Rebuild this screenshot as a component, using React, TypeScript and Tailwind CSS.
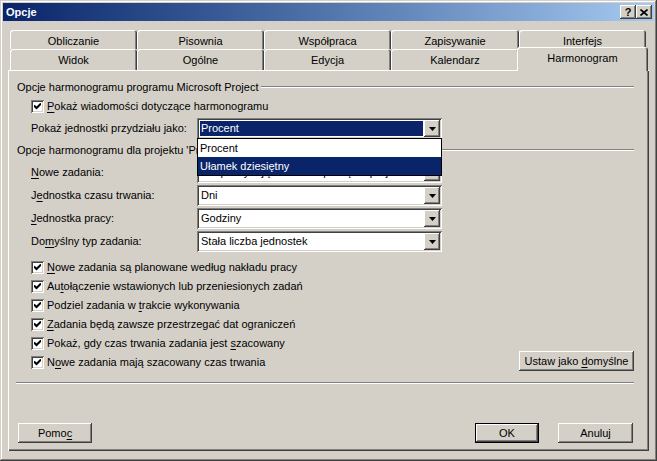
import React from 'react';

const raised =
  'bg-[#d4d0c8] shadow-[inset_-1px_-1px_#404040,inset_1px_1px_#fff,inset_-2px_-2px_#808080]';
const sunken =
  'shadow-[inset_1px_1px_#808080,inset_-1px_-1px_#fff,inset_2px_2px_#404040,inset_-2px_-2px_#d4d0c8]';

function U({ children }: { children: React.ReactNode }) {
  return <span className="underline underline-offset-[2px]">{children}</span>;
}

function Check() {
  return (
    <div className={`w-[13px] h-[13px] shrink-0 bg-white flex items-center justify-center ${sunken}`}>
      <svg width="7" height="7" viewBox="0 0 7 7">
        <path d="M0 2.5 L2.5 5 L7 0.5" stroke="#000" strokeWidth="2" fill="none" />
      </svg>
    </div>
  );
}

function Arrow() {
  return (
    <div className={`w-[16px] h-full shrink-0 flex items-center justify-center ${raised}`}>
      <svg width="7" height="4" viewBox="0 0 7 4">
        <path d="M0 0h7L3.5 4z" fill="#000" />
      </svg>
    </div>
  );
}

function Combo({ value, selected }: { value: string; selected?: boolean }) {
  return (
    <div className={`w-[245px] h-[21px] bg-white flex p-[2px] ${sunken}`}>
      {selected ? (
        <div className="flex-1 p-[1px] bg-white">
          <div className="h-full bg-[#0a246a] text-white flex items-center pl-[1px]">{value}</div>
        </div>
      ) : (
        <div className="flex-1 flex items-center pl-[2px] overflow-hidden whitespace-nowrap">{value}</div>
      )}
      <Arrow />
    </div>
  );
}

function SectionHeader({ text }: { text: string }) {
  return (
    <div className="h-[14px] flex items-center">
      <span className="whitespace-nowrap">{text}</span>
      <div className="flex-1 ml-[3px] h-[2px] border-t border-t-[#808080] border-b border-b-white" />
    </div>
  );
}

function CheckRow({ children }: { children: React.ReactNode }) {
  return (
    <div className="h-[19px] flex items-center pl-[14px]">
      <Check />
      <span className="ml-[3px] whitespace-nowrap">{children}</span>
    </div>
  );
}

function ComboRow({ label, children }: { label: React.ReactNode; children: React.ReactNode }) {
  return (
    <div className="h-[21px] flex items-center pl-[14px]">
      <div className="w-[166px] whitespace-nowrap">{label}</div>
      {children}
    </div>
  );
}

const tabWidths = ['w-[127px]', 'w-[127px]', 'w-[127px]', 'w-[128px]', 'w-[127px]'];
const row1 = ['Obliczanie', 'Pisownia', 'Współpraca', 'Zapisywanie', 'Interfejs'];
const row2 = ['Widok', 'Ogólne', 'Edycja', 'Kalendarz', 'Harmonogram'];

const tabBase =
  'bg-[#d4d0c8] rounded-t-[3px] flex items-center justify-center shadow-[inset_1px_1px_#fff,inset_-1px_0_#404040,inset_-2px_0_#808080]';

export default function App() {
  return (
    <div className="w-[657px] h-[461px] bg-[#d4d0c8] p-[3px] flex flex-col font-['Liberation_Sans',Arial,sans-serif] text-[11px] leading-none text-black shadow-[inset_-1px_-1px_#404040,inset_1px_1px_#d4d0c8,inset_-2px_-2px_#808080,inset_2px_2px_#fff]">
      {/* Title bar */}
      <div className="h-[18px] shrink-0 flex items-center bg-linear-to-r from-[#0a246a] to-[#a6caf0] pl-[3px] pr-[2px]">
        <span className="text-white font-bold text-[11px]">Opcje</span>
        <div className="ml-auto flex">
          <div className={`w-[16px] h-[14px] flex items-center justify-center font-bold text-[11px] ${raised}`}>?</div>
          <div className={`w-[16px] h-[14px] flex items-center justify-center ${raised}`}>
            <svg width="8" height="7" viewBox="0 0 8 7">
              <path d="M0.5 0.5 L7.5 6.5 M7.5 0.5 L0.5 6.5" stroke="#000" strokeWidth="1.6" fill="none" />
            </svg>
          </div>
        </div>
      </div>

      {/* Body */}
      <div className="flex-1 px-[5px] pt-[9px] flex flex-col">
        {/* Tabs */}
        <div className="pl-[2px]">
          <div className="flex h-[19px]">
            {row1.map((t, i) => (
              <div key={t} className={`${tabWidths[i]} h-full ${tabBase} pt-[4px]`}>
                {t}
              </div>
            ))}
          </div>
          <div className="flex h-[21px]">
            {row2.map((t, i) =>
              i === 4 ? (
                <div key={t} className={`${tabWidths[i]} h-full relative`}>
                  <div className={`absolute -left-[2px] -right-[2px] -top-[2px] -bottom-[1px] z-10 ${tabBase} pb-[2px]`}>
                    {t}
                  </div>
                </div>
              ) : (
                <div key={t} className={`${tabWidths[i]} h-full ${tabBase} pt-[2px]`}>
                  {t}
                </div>
              )
            )}
          </div>
        </div>

        {/* Panel */}
        <div className="h-[381px] w-[641px] flex flex-col pl-[9px] pr-[15px] pt-[10px] shadow-[inset_1px_1px_#fff,inset_-1px_-1px_#404040,inset_-2px_-2px_#808080]">
          <SectionHeader text="Opcje harmonogramu programu Microsoft Project" />
          <div className="mt-[6px] h-[13px] flex items-center pl-[14px]">
            <Check />
            <span className="ml-[3px]">
              <U>P</U>okaż wiadomości dotyczące harmonogramu
            </span>
          </div>
          <div className="mt-[5px]">
            <ComboRow label="Pokaż jednostki przydziału jako:">
              <div className="relative">
                <Combo value="Procent" selected />
                <div className="absolute left-0 top-[20px] w-[245px] h-[38px] z-20 bg-white border border-black flex flex-col">
                  <div className="h-[18px] flex items-center pl-[2px]">Procent</div>
                  <div className="h-[18px] flex items-center pl-[2px] bg-[#0a246a] text-white">Ułamek dziesiętny</div>
                </div>
              </div>
            </ComboRow>
          </div>
          <div className="mt-[4px]">
            <SectionHeader text="Opcje harmonogramu dla projektu 'Projekt1'" />
          </div>
          <div className="mt-[5px] flex flex-col gap-[2px]">
            <ComboRow label={<><U>N</U>owe zadania:</>}>
              <Combo value="Rozpoczynają w dniu rozpoczęcia projektu" />
            </ComboRow>
            <ComboRow label={<>J<U>e</U>dnostka czasu trwania:</>}>
              <Combo value="Dni" />
            </ComboRow>
            <ComboRow label={<><U>J</U>ednostka pracy:</>}>
              <Combo value="Godziny" />
            </ComboRow>
            <ComboRow label={<>Do<U>m</U>yślny typ zadania:</>}>
              <Combo value="Stała liczba jednostek" />
            </ComboRow>
          </div>

          <div className="mt-[6px] flex justify-between items-end">
            <div className="flex flex-col">
              <CheckRow>
                <U>N</U>owe zadania są planowane według nakładu pracy
              </CheckRow>
              <CheckRow>
                Au<U>t</U>ołączenie wstawionych lub przeniesionych zadań
              </CheckRow>
              <CheckRow>
                Podziel zadania w <U>t</U>rakcie wykonywania
              </CheckRow>
              <CheckRow>
                <U>Z</U>adania będą zawsze przestrzegać dat ograniczeń
              </CheckRow>
              <CheckRow>
                Pokaż, gdy czas trwania zadania jest <U>s</U>zacowany
              </CheckRow>
              <CheckRow>
                N<U>o</U>we zadania mają szacowany czas trwania
              </CheckRow>
            </div>
            <div className={`w-[115px] h-[20px] mb-[1px] flex items-center justify-center ${raised}`}>
              <span>
                Ustaw jako <U>d</U>omyślne
              </span>
            </div>
          </div>

          <div className="mt-[10px] -ml-[1px] h-[2px] border-t border-t-[#808080] border-b border-b-white" />

          <div className="mt-[39px] h-[20px] flex">
            <div className={`ml-[1px] w-[74px] h-full flex items-center justify-center ${raised}`}>
              <span>
                Pomo<U>c</U>
              </span>
            </div>
            <div className="flex-1" />
            <div className="w-[64px] h-full border border-black">
              <div className={`w-full h-full flex items-center justify-center ${raised}`}>OK</div>
            </div>
            <div className={`ml-[19px] mr-[1px] w-[75px] h-full flex items-center justify-center ${raised}`}>
              Anuluj
            </div>
          </div>
        </div>
      </div>
    </div>
  );
}
